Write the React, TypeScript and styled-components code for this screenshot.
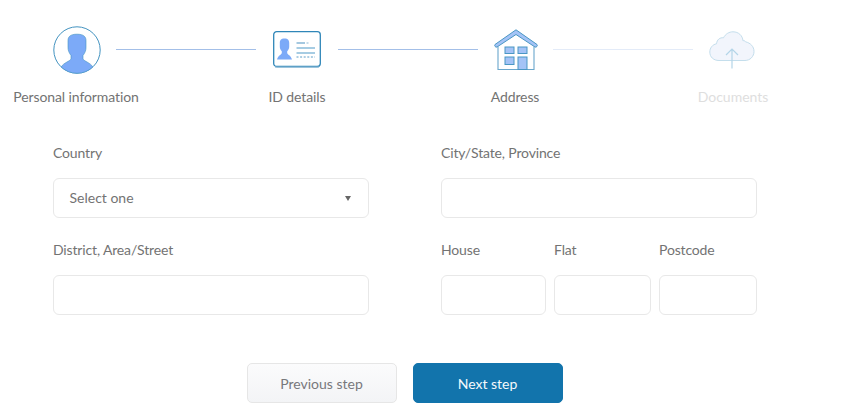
import React from "react";
import styled, { createGlobalStyle } from "styled-components";

const Global = createGlobalStyle`
  html, body { margin: 0; padding: 0; background: #fff; }
  body { font-family: "Lato", "Noto Sans", sans-serif; color: #737373; }
`;

const Page = styled.div`
  width: 841px;
  height: 420px;
  overflow: hidden;
  box-sizing: border-box;
  padding-top: 26px;
`;

const Stepper = styled.div`
  display: flex;
  align-items: flex-start;
  padding-left: 53px;
  height: 119px;
`;

const Step = styled.div<{ $w: number }>`
  width: ${(p) => p.$w}px;
  flex: none;
  display: flex;
  flex-direction: column;
  align-items: center;
`;

const IconSlot = styled.div`
  height: 47px;
  display: flex;
  align-items: center;
  justify-content: center;
  svg { display: block; flex: none; }
`;

const StepLabel = styled.div<{ $muted?: boolean; $nudge?: number }>`
  margin-top: 16px;
  margin-left: ${(p) => (p.$nudge && p.$nudge > 0 ? p.$nudge : 0)}px;
  margin-right: ${(p) => (p.$nudge && p.$nudge < 0 ? -p.$nudge : 0)}px;
  font-size: 14px;
  line-height: 16px;
  letter-spacing: ${(p) => (p.$muted ? "0" : "-0.1px")};
  white-space: nowrap;
  color: ${(p) => (p.$muted ? "#dedede" : "#737373")};
`;

const Connector = styled.div<{ $pale?: boolean; $left: number; $right: number }>`
  flex: none;
  width: 140px;
  height: 1px;
  margin: 23px ${(p) => p.$right}px 0 ${(p) => p.$left}px;
  background: ${(p) => (p.$pale ? "#e3ebf8" : "#a3bfe8")};
`;

const Form = styled.div`
  display: grid;
  grid-template-columns: 316px 316px;
  column-gap: 72px;
  row-gap: 24px;
  padding-left: 53px;
`;

const Field = styled.div`
  display: flex;
  flex-direction: column;
`;

const Label = styled.label`
  font-size: 14px;
  line-height: 16px;
  height: 16px;
  margin-bottom: 17px;
  letter-spacing: -0.15px;
  white-space: nowrap;
  color: #737373;
`;

const TextBox = styled.input`
  box-sizing: border-box;
  width: 100%;
  height: 40px;
  border: 1px solid #e8e8e8;
  border-radius: 6px;
  background: #fff;
  outline: none;
  padding: 0 16px;
  font: inherit;
`;

const SelectBox = styled.div`
  box-sizing: border-box;
  height: 40px;
  border: 1px solid #e8e8e8;
  border-radius: 6px;
  background: #fff;
  padding: 0 16px 0 15.500px;
  display: flex;
  align-items: center;
  justify-content: space-between;
  font-size: 14px;
  color: #737373;
`;

const SelectValue = styled.span`
  margin-bottom: 2px;
`;

const Caret = styled.span`
  width: 0;
  height: 0;
  border-left: 3px solid transparent;
  border-right: 3px solid transparent;
  border-top: 5px solid #666;
  margin-right: 1px;
`;

const AddressRow = styled.div`
  display: grid;
  grid-template-columns: 105px 97px 98px;
  column-gap: 8px;
`;

const Actions = styled.div`
  display: flex;
  justify-content: center;
  gap: 16px;
  width: 810px;
  margin-top: 48px;
`;

const Button = styled.button<{ $primary?: boolean }>`
  box-sizing: border-box;
  width: 150px;
  height: 40px;
  border-radius: 5px;
  font-family: inherit;
  font-size: 14px;
  padding: 0 7px 0 6px;
  border: 1px solid ${(p) => (p.$primary ? "#1274ac" : "#e6e6e6")};
  color: ${(p) => (p.$primary ? "#f4f9fc" : "#78787c")};
  background: ${(p) =>
    p.$primary ? "#1274ac" : "linear-gradient(180deg, #fbfbfc 0%, #f3f4f6 100%)"};
`;

const PersonIcon = () => (
  <svg width="48" height="48" viewBox="0 0 48 48">
    <circle cx="24" cy="24" r="23.2" fill="#fff" stroke="#4393c0" strokeWidth="1" />
    <path
      d="M24 8.200C17.500 8.200 15 10.600 15 14.500L15 21.500C15 24.500 16 26.800 18 29.500L18 32.500C18 35 10.500 36.500 8.200 41A23 23 0 0 0 39.800 41C37.500 36.500 30 35 30 32.500L30 29.500C32 26.800 33 24.500 33 21.500L33 14.500C33 10.600 30.500 8.200 24 8.200Z"
      fill="#7caaf8"
      stroke="#4393c0"
      strokeWidth="0.6"
    />
  </svg>
);

const CardIcon = () => (
  <svg width="48" height="37" viewBox="0 0 48 37">
    <rect x="0.7" y="0.7" width="46.600" height="34.800" rx="3" fill="#fff" stroke="#2f86b8" strokeWidth="1.300" />
    <path d="M2 35.800H46" stroke="#6fa8cc" strokeWidth="1.200" />
    <path
      d="M11.500 7.500C7.800 7.500 6.800 9.500 6.800 11.800L6.800 15.500C6.800 17.500 7.500 18.800 8.800 20.200L8.800 22C8.800 23.500 5 24.500 4 28.500L19 28.500C18 24.500 14.200 23.500 14.200 22L14.200 20.200C15.500 18.800 16.200 17.500 16.200 15.500L16.200 11.800C16.200 9.500 15.200 7.500 11.500 7.500Z"
      fill="#7caaf8"
    />
    <path d="M23.500 12H32" stroke="#5a9cc6" strokeWidth="1.100" />
    <path d="M33.500 12H35.500" stroke="#8bb8d6" strokeWidth="1" />
    <path d="M23.500 17H42M23.500 22H42" stroke="#4f9ac8" strokeWidth="1.200" />
    <path d="M23.500 26H42" stroke="#5a9cc6" strokeWidth="1" strokeDasharray="2 1.600" />
  </svg>
);

const HouseIcon = () => (
  <svg width="44" height="42" viewBox="0 0 44 42">
    <path d="M4 17.500V40.500H40V17.500" fill="#fff" stroke="#6aa7cc" strokeWidth="1.100" />
    <path
      d="M22 .8L43 15.500C44 16.500 42.500 18.800 41 18L22 5.500L3 18C1.500 18.800 0 16.500 1 15.500Z"
      fill="#a4c3f6"
      stroke="#4a97c4"
      strokeWidth="1"
      strokeLinejoin="round"
    />
    <g fill="#a4c3f6" stroke="#4a97c4" strokeWidth="1">
      <rect x="11" y="18" width="9" height="6.500" />
      <rect x="24" y="18" width="9" height="6.500" />
      <rect x="11" y="28" width="9" height="7.500" />
      <rect x="24" y="28" width="9" height="12.500" />
    </g>
  </svg>
);

const CloudIcon = () => (
  <svg width="46" height="38" viewBox="0 0 46 38">
    <path
      d="M10 29.500C4.500 29.500 .8 26 .8 21C.8 17 3.500 13.500 7.500 12.800C8 8.500 11 6.300 14.500 6.800C16.500 3 20 .8 24 .8C29.500 .8 33.500 4.500 34 9.800C35 9.300 36 9.800 36.500 10.800C41.500 12 45 15.500 45 20.500C45 25.500 41 29.500 36 29.500Z"
      fill="#f2f5fc"
      stroke="#c4deec"
      strokeWidth="1"
    />
    <path d="M23 37.500V18M17 24L23 18L29 24" fill="none" stroke="#b4d5e8" strokeWidth="1.200" />
  </svg>
);

export default function App() {
  return (
    <Page>
      <Global />
      <Stepper>
        <Step $w={48}>
          <IconSlot><PersonIcon /></IconSlot>
          <StepLabel $nudge={-2}>Personal information</StepLabel>
        </Step>
        <Connector $left={15} $right={17} />
        <Step $w={48}>
          <IconSlot><CardIcon /></IconSlot>
          <StepLabel>ID details</StepLabel>
        </Step>
        <Connector $left={17} $right={16} />
        <Step $w={44}>
          <IconSlot><HouseIcon /></IconSlot>
          <StepLabel $nudge={-2}>Address</StepLabel>
        </Step>
        <Connector $pale $left={15} $right={16} />
        <Step $w={46}>
          <IconSlot><CloudIcon /></IconSlot>
          <StepLabel $muted $nudge={2}>Documents</StepLabel>
        </Step>
      </Stepper>
      <Form>
        <Field>
          <Label>Country</Label>
          <SelectBox>
            <SelectValue>Select one</SelectValue>
            <Caret />
          </SelectBox>
        </Field>
        <Field>
          <Label>City/State, Province</Label>
          <TextBox />
        </Field>
        <Field>
          <Label>District, Area/Street</Label>
          <TextBox />
        </Field>
        <AddressRow>
          <Field>
            <Label>House</Label>
            <TextBox />
          </Field>
          <Field>
            <Label>Flat</Label>
            <TextBox />
          </Field>
          <Field>
            <Label>Postcode</Label>
            <TextBox />
          </Field>
        </AddressRow>
      </Form>
      <Actions>
        <Button>Previous step</Button>
        <Button $primary>Next step</Button>
      </Actions>
    </Page>
  );
}
